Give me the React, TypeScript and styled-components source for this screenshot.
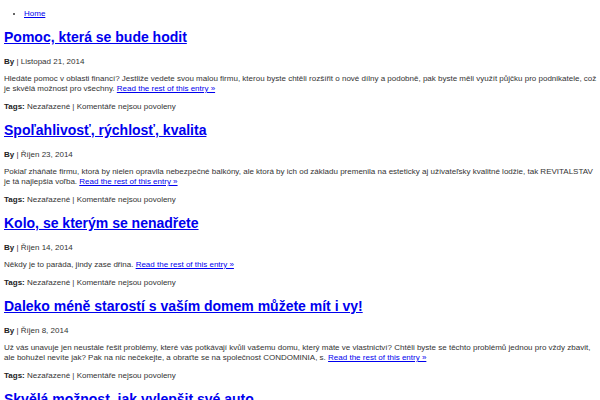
import { createGlobalStyle, styled } from "styled-components";

const GlobalStyle = createGlobalStyle`
  body {
    margin: 0;
    padding: 0 0 0 4px;
    background: #fff;
    font-family: "Liberation Sans", Arial, sans-serif;
    font-size: 8px;
    color: #333;
  }
  a {
    color: #0000ee;
  }
`;

type Post = {
  title: string;
  date: string;
  text: string;
  tags?: boolean;
};

const posts: Post[] = [
  {
    title: "Pomoc, která se bude hodit",
    date: "Listopad 21, 2014",
    text: "Hledáte pomoc v oblasti financí? Jestliže vedete svou malou firmu, kterou byste chtěli rozšířit o nové dílny a podobně, pak byste měli využít půjčku pro podnikatele, což je skvělá možnost pro všechny.",
    tags: true,
  },
  {
    title: "Spoľahlivosť, rýchlosť, kvalita",
    date: "Říjen 23, 2014",
    text: "Pokiaľ zháňate firmu, ktorá by nielen opravila nebezpečné balkóny, ale ktorá by ich od základu premenila na esteticky aj užívateľsky kvalitné lodžie, tak REVITALSTAV je tá najlepšia voľba.",
    tags: true,
  },
  {
    title: "Kolo, se kterým se nenadřete",
    date: "Říjen 14, 2014",
    text: "Někdy je to paráda, jindy zase dřina.",
    tags: true,
  },
  {
    title: "Daleko méně starostí s vaším domem můžete mít i vy!",
    date: "Říjen 8, 2014",
    text: "Už vás unavuje jen neustále řešit problémy, které vás potkávají kvůli vašemu domu, který máte ve vlastnictví? Chtěli byste se těchto problémů jednou pro vždy zbavit, ale bohužel nevíte jak? Pak na nic nečekejte, a obraťte se na společnost CONDOMINIA, s.",
    tags: true,
  },
  {
    title: "Skvělá možnost, jak vylepšit své auto",
    date: "Říjen 2, 2014",
    text: "",
  },
];

function App() {
  return (
    <>
      <GlobalStyle />
      <Menu>
        <li>
          <a href="#">Home</a>
        </li>
      </Menu>
      {posts.map((post) => (
        <Entry key={post.title}>
          <Title>
            <a href="#">{post.title}</a>
          </Title>
          <Meta>
            <b>By</b> | {post.date}
          </Meta>
          {post.text && (
            <Text>
              {post.text} <a href="#">Read the rest of this entry »</a>
            </Text>
          )}
          {post.tags && (
            <Meta>
              <b>Tags:</b> Nezařazené | Komentáře nejsou povoleny
            </Meta>
          )}
        </Entry>
      ))}
    </>
  );
}

export default App;

const Menu = styled.ul`
  margin: 0;
  padding: 8px 0 7px 20px;
  line-height: 11px;
  li {
    list-style: disc;
  }
`;

const Entry = styled.div`
  display: flex;
  flex-direction: column;
`;

const Title = styled.h2`
  margin: 3px 0 11px;
  font-size: 14px;
  line-height: 16px;
  font-weight: bold;
`;

const Meta = styled.p`
  margin: 0 0 7px;
  line-height: 11px;
  b {
    color: #222;
  }
`;

const Text = styled.p`
  margin: 0 0 7px;
  line-height: 10px;
`;
